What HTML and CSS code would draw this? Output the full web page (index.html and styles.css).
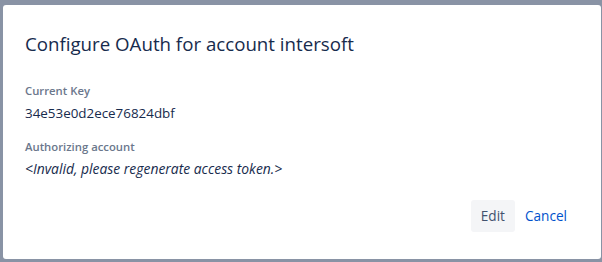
FILE: index.html
```html
<!DOCTYPE html>
<html>
<head>
<meta charset="utf-8">
<link rel="stylesheet" href="styles.css">
</head>
<body>
<div class="backdrop">
  <div class="dialog">
    <h1 class="title">Configure OAuth for account intersoft</h1>
    <div class="field">
      <div class="label">Current Key</div>
      <div class="value">34e53e0d2ece76824dbf</div>
    </div>
    <div class="field">
      <div class="label">Authorizing account</div>
      <div class="value italic">&lt;Invalid, please regenerate access token.&gt;</div>
    </div>
    <div class="footer">
      <button class="btn btn-default">Edit</button>
      <button class="btn btn-link">Cancel</button>
    </div>
  </div>
</div>
</body>
</html>
```
FILE: styles.css
```css
html, body {
  margin: 0;
  padding: 0;
  width: 602px;
  height: 262px;
  overflow: hidden;
  background: #8993a5;
  font-family: "Open Sans", "Noto Sans", sans-serif;
}
.backdrop {
  padding: 5px 1px 0 3px;
}
.dialog {
  background: #ffffff;
  border-radius: 3px;
  height: 254px;
  box-sizing: border-box;
  padding: 27px 24px 0 22px;
  display: flex;
  flex-direction: column;
}
.title {
  margin: 0 0 27px 0;
  font-size: 18.7px;
  font-weight: 400;
  line-height: 24px;
  color: #172b4d;
}
.field {
  margin-bottom: 16px;
}
.label {
  font-size: 11.3px;
  font-weight: 600;
  color: #6b778c;
  line-height: 16px;
  margin-bottom: 4px;
}
.value {
  font-size: 13.4px;
  color: #172b4d;
  line-height: 20px;
}
.italic {
  font-size: 13.9px;
  font-style: italic;
}
.footer {
  display: flex;
  justify-content: flex-end;
  gap: 0;
  margin-top: 5px;
}
.btn {
  font-family: inherit;
  font-size: 13.6px;
  height: 32px;
  line-height: 32px;
  padding: 0 10px;
  border: none;
  border-radius: 3px;
  cursor: pointer;
}
.btn-default {
  background: #f4f5f7;
  color: #42526e;
}
.btn-link {
  background: transparent;
  color: #0052cc;
}
```
